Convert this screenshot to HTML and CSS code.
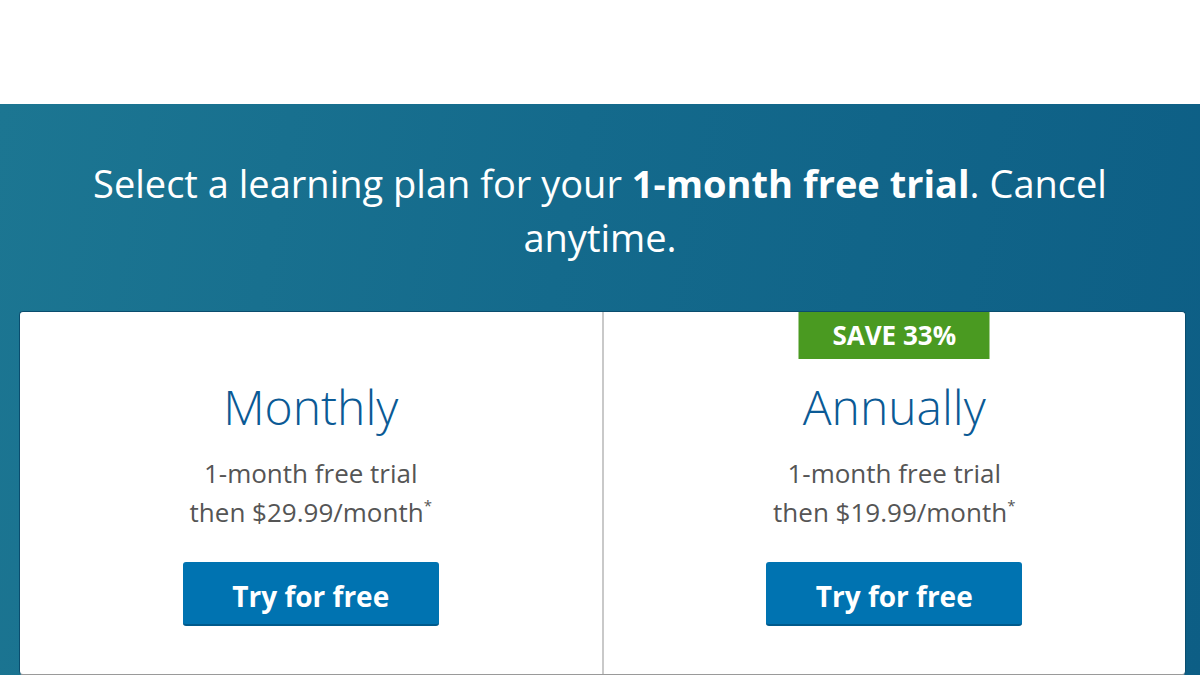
FILE: index.html
```html
<!DOCTYPE html>
<html lang="en">
<head>
  <meta charset="UTF-8" />
  <meta name="viewport" content="width=device-width, initial-scale=1.0"/>
  <title>Choose your plan</title>
  <link rel="stylesheet" href="styles.css">
</head>
<body>
  <div class="topbar"></div>

  <div class="hero">
    <h1 class="headline">Select a learning plan for your <b>1-month free trial</b>. Cancel<br>anytime.</h1>

    <div class="plans">
      <div class="plan">
        <h2 class="plan-name">Monthly</h2>
        <p class="plan-price">1-month free trial<br>then $29.99/month<sup>*</sup></p>
        <button class="try">Try for free</button>
      </div>
      <div class="plan">
        <div class="badge">SAVE 33%</div>
        <h2 class="plan-name">Annually</h2>
        <p class="plan-price">1-month free trial<br>then $19.99/month<sup>*</sup></p>
        <button class="try">Try for free</button>
      </div>
    </div>
  </div>
</body>
</html>
```

FILE: styles.css
```css
* {
  margin: 0;
  padding: 0;
  box-sizing: border-box;
}

body {
  font-family: "Open Sans", "Noto Sans", sans-serif;
  background: #fff;
  overflow: hidden;
}

.topbar {
  height: 104px;
  background: #fff;
}

.hero {
  height: 571px;
  background: linear-gradient(100deg, #1c7692 0%, #146a8c 45%, #0d5e85 100%);
  padding-top: 52px;
}

.headline {
  max-width: 1060px;
  height: 96px;
  margin: 0 auto;
  text-align: center;
  color: #fff;
  font-size: 38px;
  font-weight: 400;
  line-height: 54px;
}

.headline b {
  font-weight: 700;
}

.plans {
  display: flex;
  margin-top: 59px;
  margin-left: 19px;
  width: 1167px;
  height: 364px;
  background: #fff;
  border: 1px solid #0a4d6e;
  border-bottom-color: #9a9a9a;
  border-radius: 4px;
}

.plan {
  flex: 1;
  position: relative;
  text-align: center;
  padding-top: 63px;
}

.plan + .plan {
  border-left: 2px solid #c9c9c9;
}

.badge {
  position: absolute;
  top: 0;
  left: 50%;
  transform: translateX(-50%);
  width: 191px;
  height: 47px;
  background: #4a9a21;
  color: #fff;
  font-weight: 700;
  font-size: 26px;
  line-height: 47px;
}

.plan-name {
  font-size: 48px;
  font-weight: 300;
  color: #0b5a95;
  line-height: 64px;
}

.plan-price {
  margin-top: 15px;
  font-size: 26px;
  line-height: 39px;
  color: #555;
}

.plan-price sup {
  font-size: 15px;
  vertical-align: 11px;
  line-height: 0;
}

.try {
  margin-top: 30px;
  width: 256px;
  height: 64px;
  background: #0073b1;
  border: none;
  border-bottom: 2px solid #005a8c;
  border-radius: 3px;
  color: #fff;
  font-family: inherit;
  font-size: 28px;
  font-weight: 700;
  padding-top: 6px;
  cursor: pointer;
}
```
